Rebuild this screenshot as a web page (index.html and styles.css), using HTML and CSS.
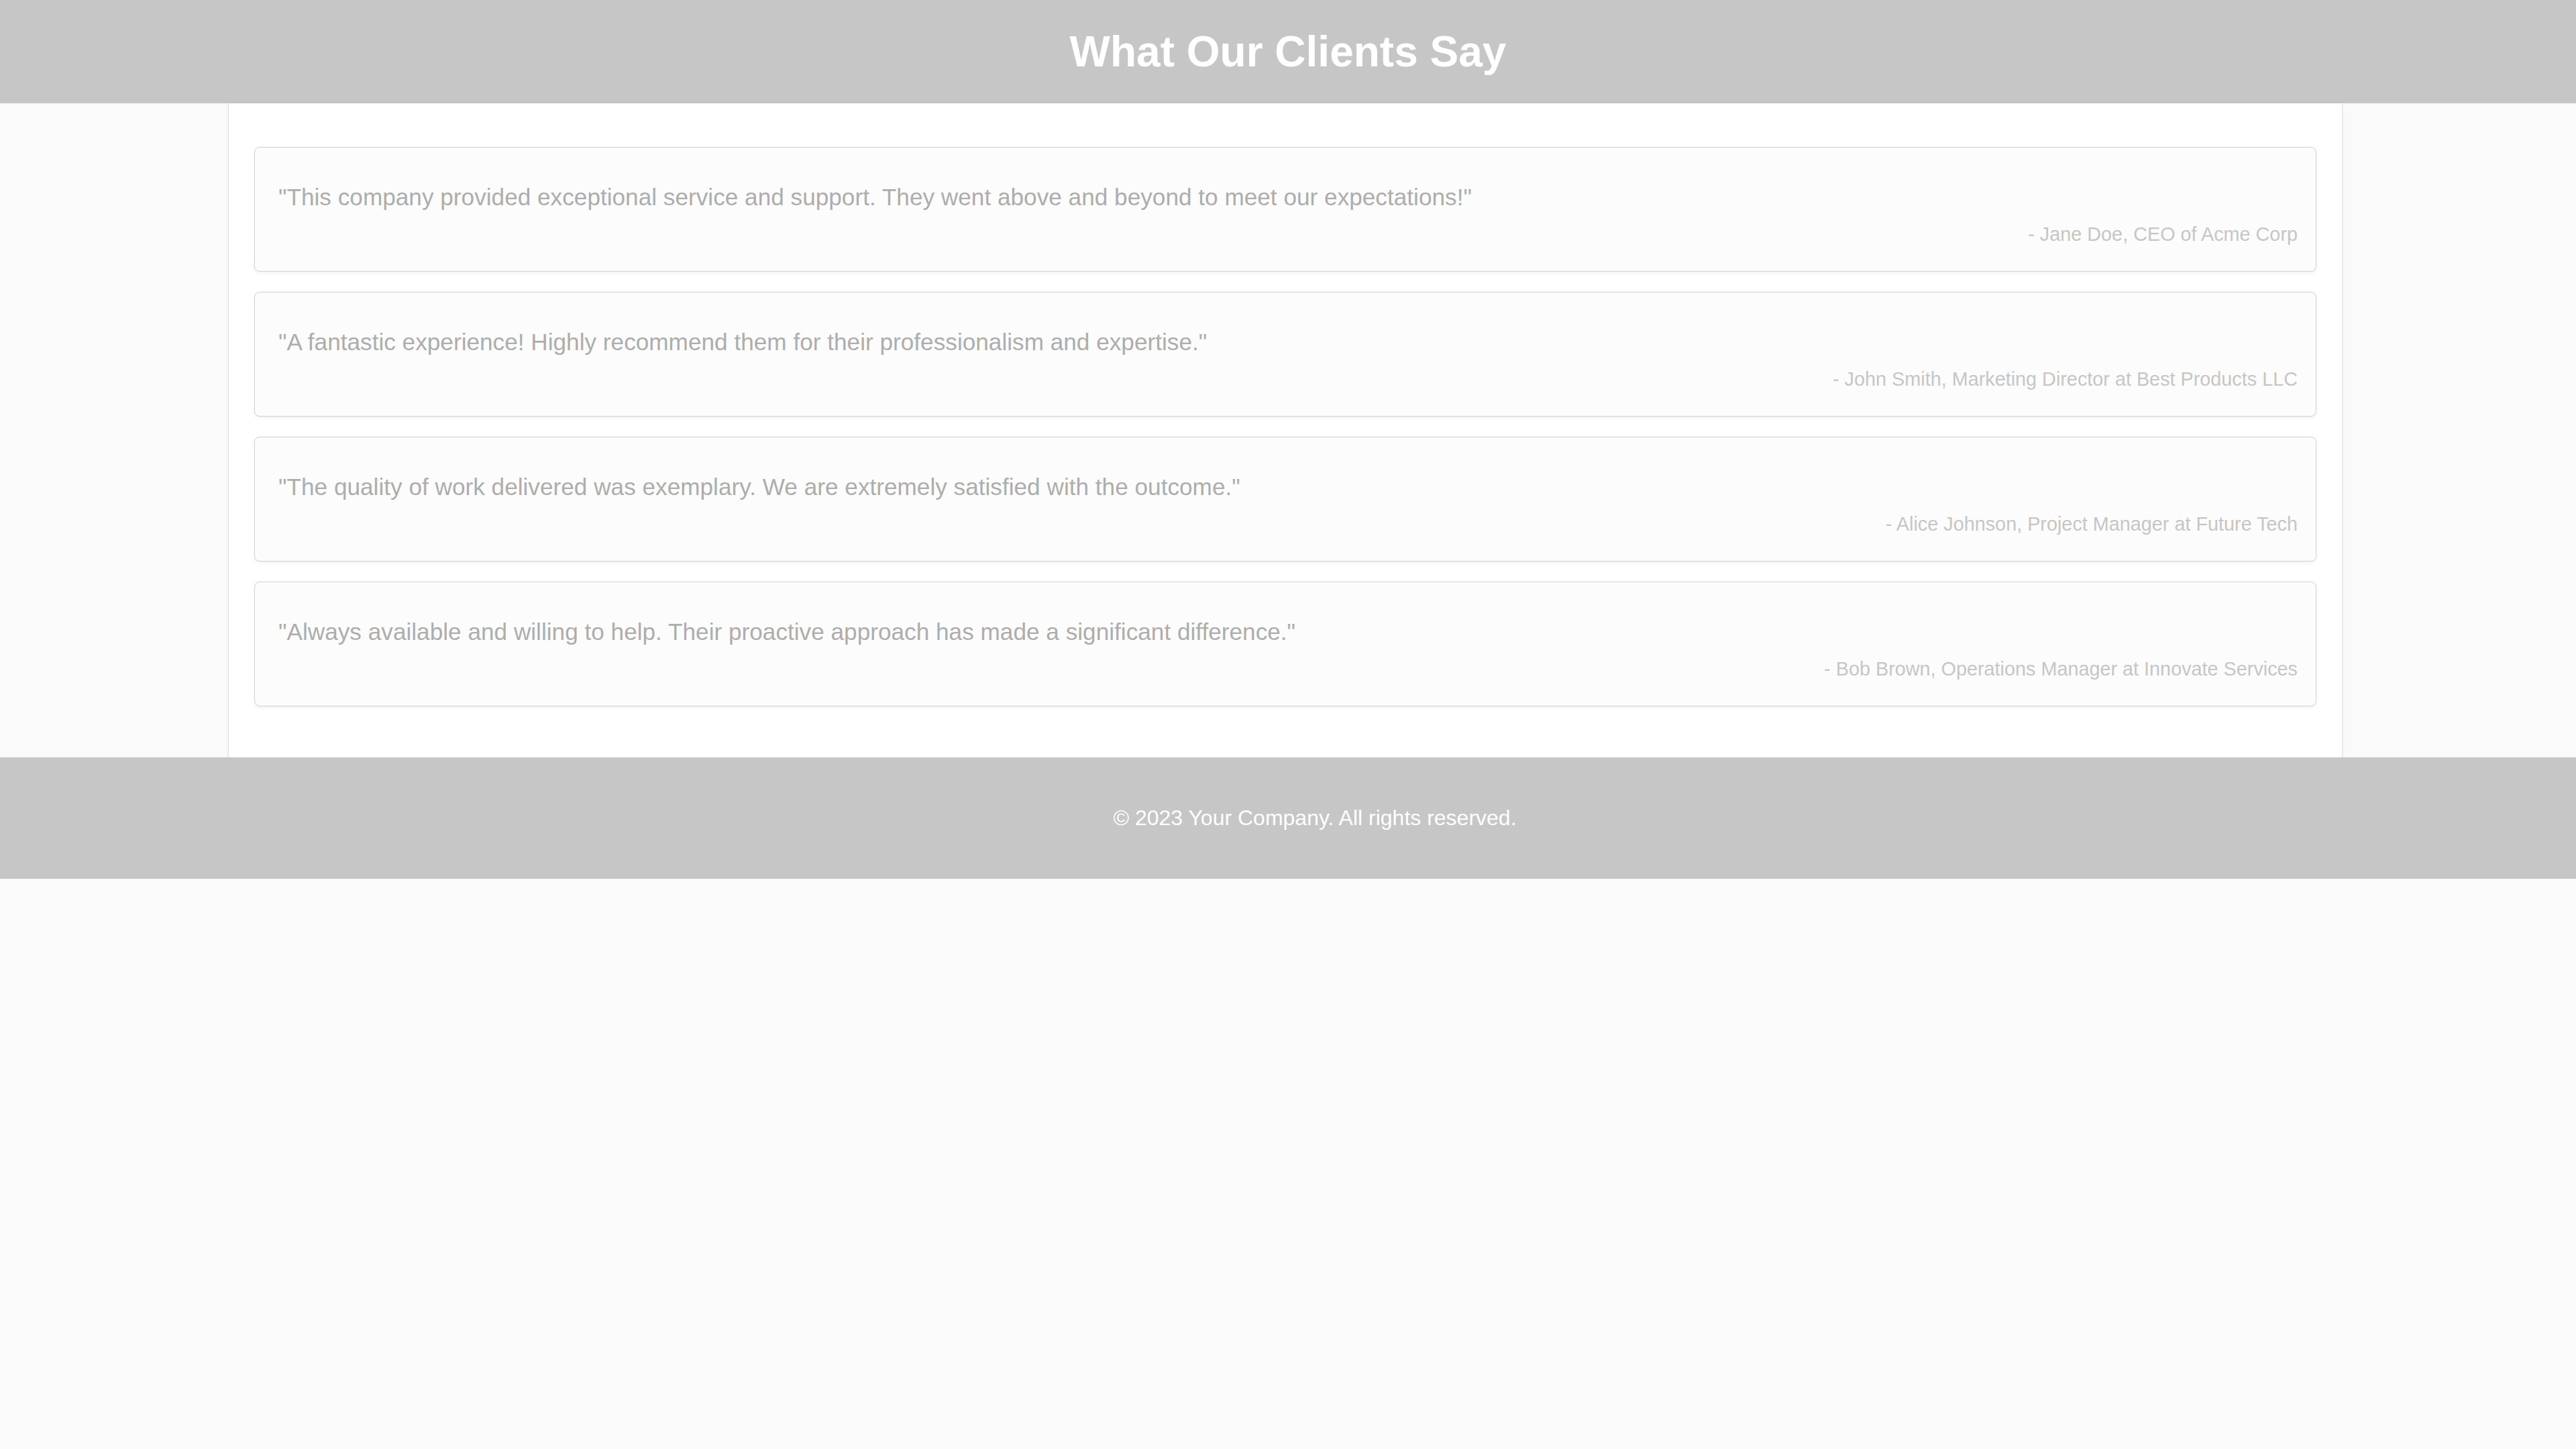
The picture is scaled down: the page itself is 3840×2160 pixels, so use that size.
FILE: index.html
```html
<!DOCTYPE html>
<html lang="en">
<head>
<meta charset="utf-8">
<title>What Our Clients Say</title>
<link rel="stylesheet" href="styles.css">
</head>
<body>
<header class="site-header">
  <h1 class="site-title">What Our Clients Say</h1>
</header>
<main class="container">
  <div class="testimonials">
    <article class="card">
      <p class="quote">"This company provided exceptional service and support. They went above and beyond to meet our expectations!"</p>
      <p class="author">- Jane Doe, CEO of Acme Corp</p>
    </article>
    <article class="card">
      <p class="quote">"A fantastic experience! Highly recommend them for their professionalism and expertise."</p>
      <p class="author">- John Smith, Marketing Director at Best Products LLC</p>
    </article>
    <article class="card">
      <p class="quote">"The quality of work delivered was exemplary. We are extremely satisfied with the outcome."</p>
      <p class="author">- Alice Johnson, Project Manager at Future Tech</p>
    </article>
    <article class="card">
      <p class="quote">"Always available and willing to help. Their proactive approach has made a significant difference."</p>
      <p class="author">- Bob Brown, Operations Manager at Innovate Services</p>
    </article>
  </div>
</main>
<footer class="site-footer">
  <p class="footer-text">© 2023 Your Company. All rights reserved.</p>
</footer>
</body>
</html>
```

FILE: styles.css
```css
* {
  box-sizing: border-box;
}

html, body {
  margin: 0;
  padding: 0;
}

body {
  background: #fafafa;
  font-family: "Liberation Sans", Arial, sans-serif;
  font-size: 32px;
  color: #b0b0b0;
}

.site-header {
  background: #c6c6c6;
  padding: 40px 0;
  text-align: center;
}

.site-title {
  margin: 0;
  font-size: 64px;
  font-weight: bold;
  line-height: normal;
  color: #ffffff;
}

.container {
  width: 3152px;
  margin: 0 0 0 340px;
  background: #ffffff;
  border-left: 1px solid #e0e0e0;
  border-right: 1px solid #e0e0e0;
  box-shadow: 0 0 6px rgba(0, 0, 0, 0.04);
  padding: 65px 38px 76px;
}

.testimonials {
  display: flex;
  flex-direction: column;
  gap: 30px;
}

.card {
  background: #fcfcfc;
  border: 1px solid #d2d2d2;
  border-radius: 8px;
  box-shadow: 0 2px 5px rgba(0, 0, 0, 0.06);
  padding: 54px 27px 38px 35px;
}

.quote {
  margin: 0 0 19px;
  font-size: 35.2px;
  line-height: normal;
  color: #adadad;
}

.author {
  margin: 0;
  font-size: 28.8px;
  line-height: normal;
  text-align: right;
  color: #c6c6c6;
}

.site-footer {
  background: #c6c6c6;
  padding: 40px 0 40px 80px;
  text-align: center;
}

.footer-text {
  margin: 32px 0;
  font-size: 32px;
  line-height: normal;
  color: #ffffff;
}
```
